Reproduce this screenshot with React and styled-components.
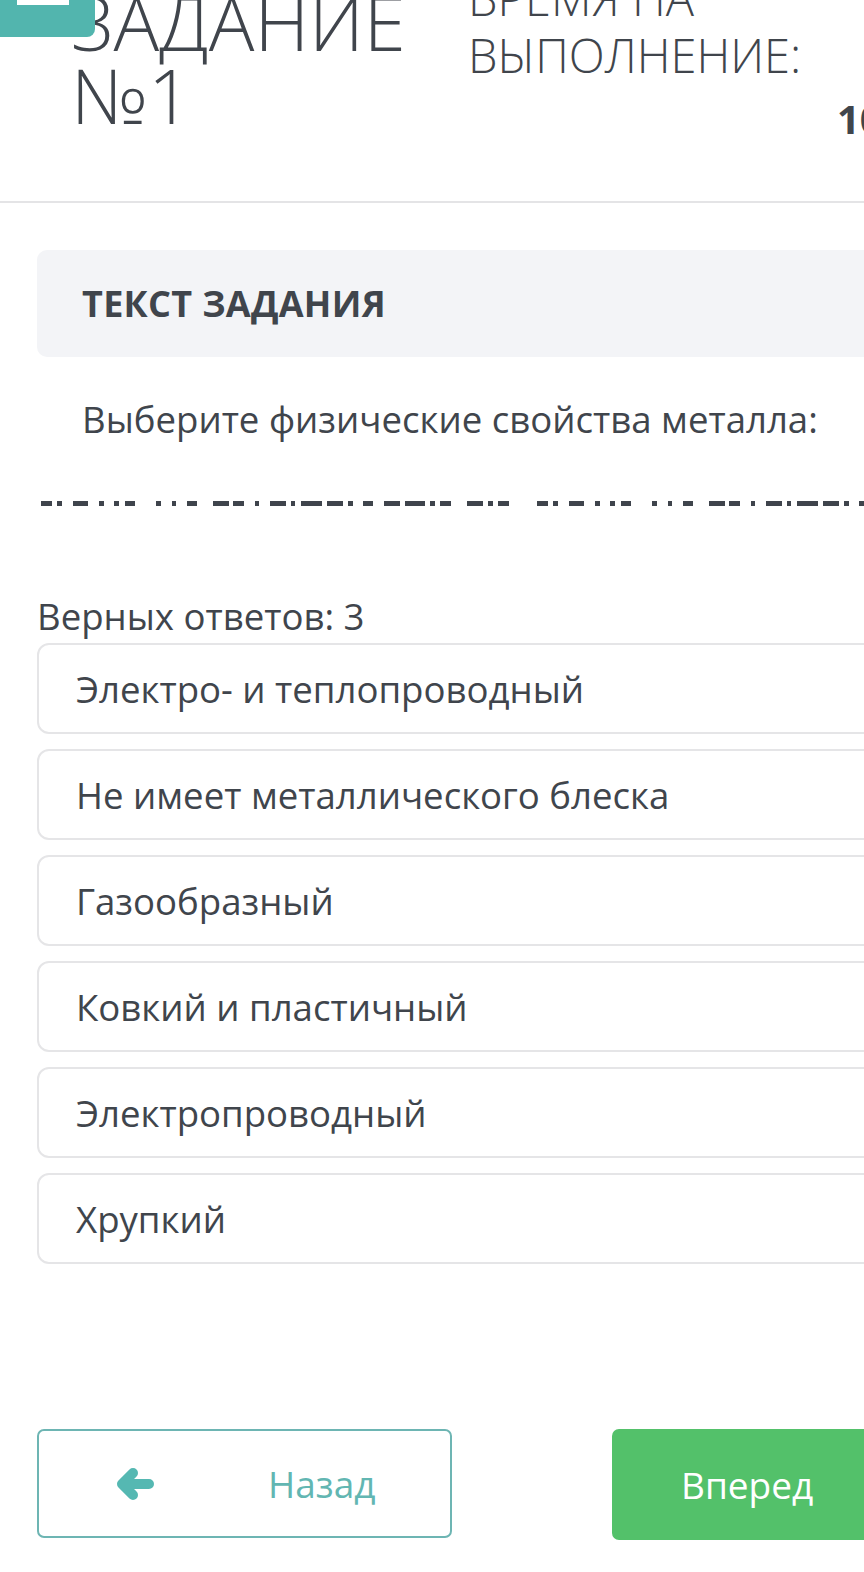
import React from 'react'
import styled, { createGlobalStyle } from 'styled-components'

const GlobalStyle = createGlobalStyle`
  html, body {
    margin: 0;
    padding: 0;
    background: #fff;
    overflow: hidden;
  }
  body {
    font-family: 'Open Sans', 'Noto Sans', sans-serif;
    color: #40454c;
  }
`

// bottom edges of a text line that got clipped by its container
const DASHES = [
  [41, 11], [57, 5], [73, 15], [99, 5], [114, 5], [125, 10],
  [156, 5], [172, 4], [187, 10], [213, 16], [233, 11], [255, 4],
  [270, 16], [291, 4], [301, 21], [327, 16], [348, 5], [363, 10],
  [384, 16], [405, 20], [430, 5], [440, 11], [467, 16], [488, 5], [498, 11],
]

const answers = [
  'Электро- и теплопроводный',
  'Не имеет металлического блеска',
  'Газообразный',
  'Ковкий и пластичный',
  'Электропроводный',
  'Хрупкий',
]

const ArrowLeft = () => (
  <svg width="38" height="32" viewBox="0 0 38 32" fill="none">
    <path
      d="M17 5 L6 16 L17 27 M6 16 H33"
      stroke="currentColor"
      strokeWidth="10"
      strokeLinecap="round"
      strokeLinejoin="round"
    />
  </svg>
)

export default function App() {
  return (
    <>
      <GlobalStyle />
      <Page>
        <Header>
          <Tab>
            <TabMark />
          </Tab>
          <Title>
            ЗАДАНИЕ
            <br />
            №1
          </Title>
          <Timer>
            <TimerLabel>
              ВРЕМЯ НА
              <br />
              ВЫПОЛНЕНИЕ:
            </TimerLabel>
            <TimerValue>10:00</TimerValue>
          </Timer>
        </Header>

        <Main>
          <TaskCard>
            <TaskCardTitle>ТЕКСТ ЗАДАНИЯ</TaskCardTitle>
          </TaskCard>
          <Question>Выберите физические свойства металла:</Question>
          <Clipped width="900" height="5" viewBox="0 0 900 5">
            {[0, 496].map((shift) =>
              DASHES.map(([x, w]) => (
                <rect key={`${shift}-${x}`} x={x + shift - 37} y="0" width={w} height="5" fill="#3f444c" />
              ))
            )}
          </Clipped>
          <CountLabel>Верных ответов: 3</CountLabel>
          <AnswerList>
            {answers.map((a) => (
              <Answer key={a}>{a}</Answer>
            ))}
          </AnswerList>
          <Nav>
            <BackButton>
              <ArrowLeft />
              <span>Назад</span>
            </BackButton>
            <NextButton>Вперед</NextButton>
          </Nav>
        </Main>
      </Page>
    </>
  )
}

const Page = styled.div`
  width: 1100px;
  position: relative;
`

const Header = styled.header`
  display: flex;
  align-items: flex-start;
  height: 201px;
  border-bottom: 2px solid #e4e4e6;
  overflow: hidden;
`

const Tab = styled.div`
  position: absolute;
  left: 0;
  top: 0;
  width: 95px;
  height: 37px;
  background: #52b5ae;
  border-bottom-right-radius: 8px;
  z-index: 2;
`

const TabMark = styled.div`
  margin-left: 17px;
  width: 52px;
  height: 5px;
  background: #fff;
`

const Title = styled.h1`
  margin: -15px 0 0 71px;
  font-size: 76px;
  line-height: 73px;
  font-weight: 300;
  color: #40454c;
  width: 397px;
`

const Timer = styled.div`
  display: flex;
  flex-direction: column;
`

const TimerLabel = styled.div`
  margin-top: -30px;
  font-size: 47px;
  line-height: 57px;
  font-weight: 300;
`

const TimerValue = styled.div`
  margin: 10px 0 0 369px;
  font-size: 40px;
  line-height: 50px;
  font-weight: 700;
`

const Main = styled.main`
  padding: 47px 0 0 37px;
  display: flex;
  flex-direction: column;
`

const TaskCard = styled.div`
  height: 107px;
  background: #f3f4f7;
  border-radius: 10px;
  display: flex;
  align-items: center;
  padding-left: 45px;
`

const TaskCardTitle = styled.div`
  font-size: 36px;
  font-weight: 700;
  letter-spacing: 0.3px;
  color: #40454c;
`

const Question = styled.p`
  margin: 38px 0 0 45px;
  font-size: 36.6px;
  line-height: 48px;
`

const Clipped = styled.svg`
  display: block;
  margin-top: 58px;
`

const CountLabel = styled.div`
  margin-top: 86px;
  font-size: 36.6px;
  line-height: 48px;
`

const AnswerList = styled.div`
  margin-top: 3px;
  display: flex;
  flex-direction: column;
  gap: 15px;
`

const Answer = styled.div`
  height: 87px;
  border: 2px solid #e5e5e7;
  border-radius: 12px;
  display: flex;
  align-items: center;
  padding-left: 37px;
  font-size: 36.6px;
`

const Nav = styled.div`
  margin-top: 165px;
  display: flex;
  gap: 160px;
`

const BackButton = styled.button`
  width: 415px;
  height: 109px;
  border: 2px solid #6db5b3;
  border-radius: 7px;
  background: #fff;
  color: #62b6b2;
  display: flex;
  align-items: center;
  padding: 0 0 0 77px;
  gap: 114px;
  font-family: inherit;
  font-size: 37px;
  cursor: pointer;
  svg {
    color: #55b8b2;
  }
`

const NextButton = styled.button`
  width: 420px;
  height: 111px;
  border: none;
  border-radius: 7px;
  background: #53c16a;
  color: #fff;
  display: flex;
  align-items: center;
  padding-left: 69px;
  font-family: inherit;
  font-size: 37px;
  cursor: pointer;
`
